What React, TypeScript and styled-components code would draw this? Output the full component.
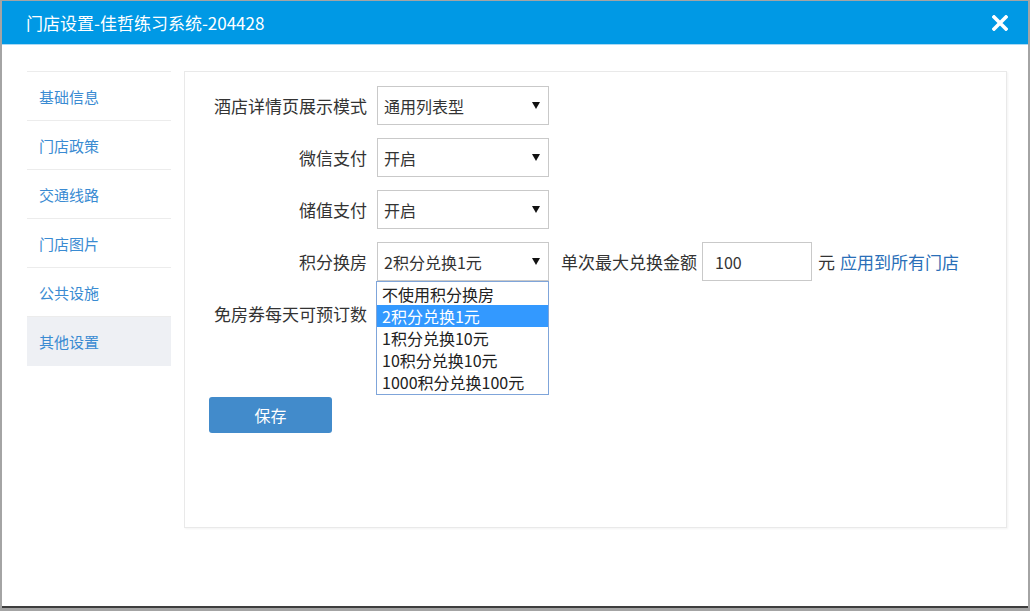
import styled, { createGlobalStyle } from "styled-components";

const GlobalStyle = createGlobalStyle`
  body {
    margin: 0;
    padding-top: 1px;
    background: #a4a4a4;
    font-family: "Noto Sans CJK SC", "Noto Sans", sans-serif;
    color: #333;
  }
`;

const Dialog = styled.div`
  margin-left: 2px;
  width: 1026px;
  height: 605px;
  background: #fff;
  border-bottom: 2px solid #3e3e3e;
  display: flex;
  flex-direction: column;
`;

const TitleBar = styled.div`
  height: 43px;
  background: #0099e5;
  border-bottom: 1px solid #a9d9f4;
  display: flex;
  align-items: center;
  justify-content: space-between;
  padding: 0 20px 0 24px;
  color: #fff;
  font-size: 17px;
`;

const CloseButton = styled.button`
  border: 0;
  padding: 0;
  background: none;
  width: 16px;
  height: 16px;
  display: flex;
  cursor: pointer;
`;

const Body = styled.div`
  display: flex;
  gap: 13px;
  padding: 26px 21px 0 25px;
`;

const Sidebar = styled.ul`
  list-style: none;
  margin: 0;
  padding: 0;
  width: 144px;
  border-top: 1px solid #ececec;
`;

const SideItem = styled.li<{ active?: boolean }>`
  height: 48px;
  line-height: 50px;
  padding-left: 12px;
  font-size: 15px;
  color: #3a8bd2;
  border-bottom: 1px solid ${({ active }) => (active ? "transparent" : "#ececec")};
  background: ${({ active }) => (active ? "#eef0f4" : "transparent")};
  cursor: pointer;
`;

const Panel = styled.div`
  flex: 1;
  box-sizing: border-box;
  height: 457px;
  border: 1px solid #e9e9e9;
  box-shadow: 1px 1px 2px rgba(0, 0, 0, 0.05);
  padding-top: 14px;
`;

const Row = styled.div`
  display: flex;
  align-items: center;
  height: 39px;
  margin-bottom: 13px;
`;

const Label = styled.label`
  width: 182px;
  text-align: right;
  font-size: 17px;
  color: #333;
  margin-right: 10px;
  white-space: nowrap;
`;

const SelectWrap = styled.div`
  position: relative;
  width: 172px;
  height: 39px;
`;

const SelectBox = styled.div`
  box-sizing: border-box;
  height: 100%;
  border: 1px solid #c9c9c9;
  display: flex;
  align-items: center;
  justify-content: space-between;
  padding: 0 8px 0 6px;
  font-size: 16px;
  color: #333;
  background: #fff;
`;

const OptionList = styled.ul`
  position: absolute;
  top: 100%;
  left: -1px;
  width: 173px;
  box-sizing: border-box;
  margin: 0;
  padding: 1px 0;
  list-style: none;
  background: #fff;
  border: 1px solid #7fa5da;
  z-index: 2;
`;

const OptionItem = styled.li<{ selected?: boolean }>`
  height: 22px;
  line-height: 22px;
  padding-left: 5px;
  font-size: 16px;
  white-space: nowrap;
  color: ${({ selected }) => (selected ? "#fff" : "#222")};
  background: ${({ selected }) => (selected ? "#3399ff" : "#fff")};
`;

const Text = styled.span<{ gapLeft?: number }>`
  margin-left: ${({ gapLeft }) => gapLeft ?? 0}px;
  font-size: 17px;
  color: #333;
  white-space: nowrap;
`;

const AmountInput = styled.input`
  box-sizing: border-box;
  width: 110px;
  height: 39px;
  border: 1px solid #c9c9c9;
  padding: 0 0 0 12px;
  margin: 0 6px 0 5px;
  font-family: inherit;
  font-size: 16px;
  color: #333;
  outline: none;
`;

const ApplyLink = styled.a`
  margin-left: 5px;
  font-size: 17px;
  color: #2a6fb8;
  text-decoration: none;
  white-space: nowrap;
  cursor: pointer;
`;

const SaveButton = styled.button`
  margin: 51px 0 0 24px;
  width: 123px;
  height: 36px;
  border: 0;
  border-radius: 3px;
  background: #428bcb;
  color: #fff;
  font-family: inherit;
  font-size: 16px;
  cursor: pointer;
`;

const Arrow = () => (
  <svg width="8" height="7" viewBox="0 0 8 7">
    <polygon points="0,0 8,0 4,7" fill="#111" />
  </svg>
);

const menu = ["基础信息", "门店政策", "交通线路", "门店图片", "公共设施", "其他设置"];
const exchangeOptions = [
  "不使用积分换房",
  "2积分兑换1元",
  "1积分兑换10元",
  "10积分兑换10元",
  "1000积分兑换100元",
];

function Select({ value, children }: { value: string; children?: React.ReactNode }) {
  return (
    <SelectWrap>
      <SelectBox>
        <span>{value}</span>
        <Arrow />
      </SelectBox>
      {children}
    </SelectWrap>
  );
}

export default function App() {
  return (
    <>
      <GlobalStyle />
      <Dialog>
        <TitleBar>
          <span>门店设置-佳哲练习系统-204428</span>
          <CloseButton aria-label="关闭">
            <svg width="16" height="16" viewBox="0 0 16 16">
              <path d="M2 2 L14 14 M14 2 L2 14" stroke="#fff" strokeWidth="3.6" strokeLinecap="square" />
            </svg>
          </CloseButton>
        </TitleBar>
        <Body>
          <Sidebar>
            {menu.map((m) => (
              <SideItem key={m} active={m === "其他设置"}>
                {m}
              </SideItem>
            ))}
          </Sidebar>
          <Panel>
            <Row>
              <Label>酒店详情页展示模式</Label>
              <Select value="通用列表型" />
            </Row>
            <Row>
              <Label>微信支付</Label>
              <Select value="开启" />
            </Row>
            <Row>
              <Label>储值支付</Label>
              <Select value="开启" />
            </Row>
            <Row>
              <Label>积分换房</Label>
              <Select value="2积分兑换1元">
                <OptionList>
                  {exchangeOptions.map((o) => (
                    <OptionItem key={o} selected={o === "2积分兑换1元"}>
                      {o}
                    </OptionItem>
                  ))}
                </OptionList>
              </Select>
              <Text gapLeft={12}>单次最大兑换金额</Text>
              <AmountInput defaultValue="100" />
              <Text>元</Text>
              <ApplyLink>应用到所有门店</ApplyLink>
            </Row>
            <Row>
              <Label>免房券每天可预订数</Label>
              <Select value="" />
            </Row>
            <SaveButton>保存</SaveButton>
          </Panel>
        </Body>
      </Dialog>
    </>
  );
}
